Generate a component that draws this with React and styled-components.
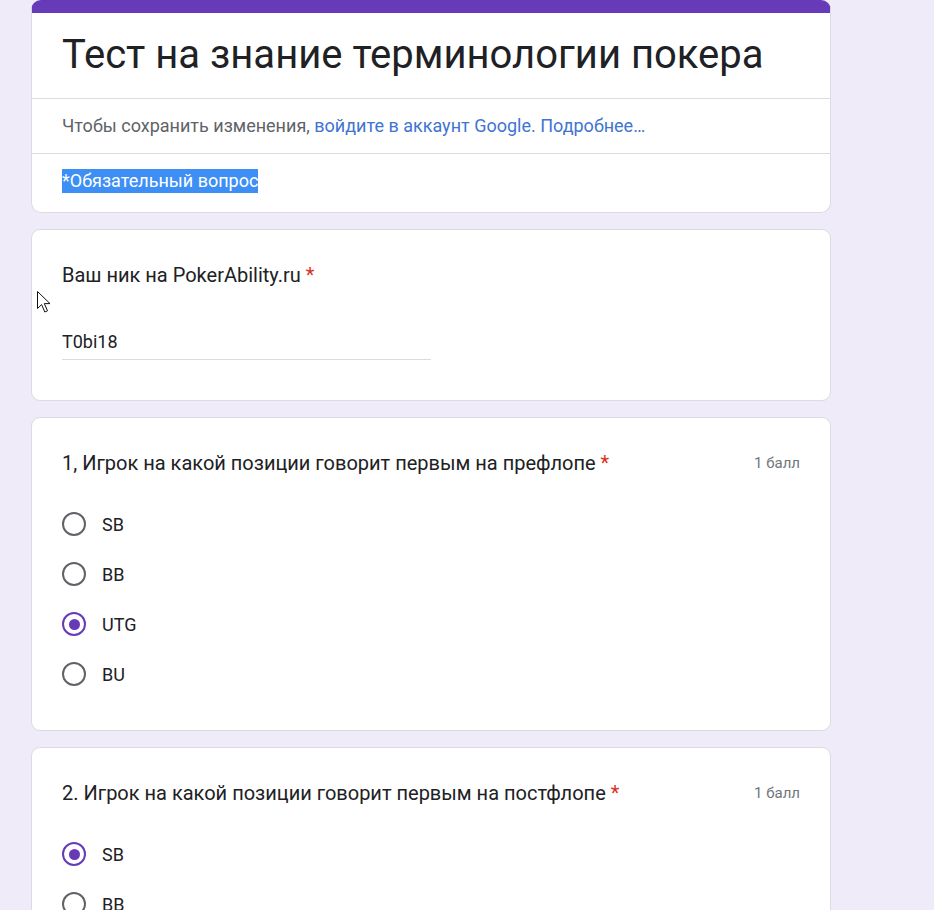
import React from 'react'
import styled, { createGlobalStyle } from 'styled-components'

const questions = [
    {
        title: '1, Игрок на какой позиции говорит первым на префлопе',
        options: ['SB', 'BB', 'UTG', 'BU'],
        checked: 'UTG'
    },
    {
        title: '2. Игрок на какой позиции говорит первым на постфлопе',
        options: ['SB', 'BB', 'UTG', 'BU'],
        checked: 'SB'
    }
]

const App = () => {
    return(
        <Page>
            <GlobalStyle />
            <HeaderCard>
                <Title>Тест на знание терминологии покера</Title>
                <Section>
                    <Note>
                        Чтобы сохранить изменения, <Link>войдите в аккаунт Google.</Link> <Link>Подробнее…</Link>
                    </Note>
                </Section>
                <Section last>
                    <Selected>*Обязательный вопрос</Selected>
                </Section>
            </HeaderCard>

            <Card>
                <QuestionRow>
                    <Question>Ваш ник на PokerAbility.ru <Star>*</Star></Question>
                </QuestionRow>
                <Answer>T0bi18</Answer>
                <Cursor width="16" height="23" viewBox="0 0 16 23">
                    <path d="M0.5 0.5 L0.5 17.5 L4.6 13.6 L7.8 21 L10.5 19.8 L7.3 12.6 L13 12.6 Z" fill="#fff" stroke="#111" strokeWidth="1" strokeLinejoin="round" />
                </Cursor>
            </Card>

            {questions.map(q => (
                <Card key={q.title} spaced>
                    <QuestionRow>
                        <Question>{q.title} <Star>*</Star></Question>
                        <Points>1 балл</Points>
                    </QuestionRow>
                    <Options>
                        {q.options.map(opt => (
                            <Option key={opt}>
                                <Radio checked={opt === q.checked} />
                                <OptionLabel>{opt}</OptionLabel>
                            </Option>
                        ))}
                    </Options>
                </Card>
            ))}
        </Page>
    )
}

export default App

const GlobalStyle = createGlobalStyle`
    html, body {
        margin: 0;
        background-color: #f0ebf8;
        font-family: Roboto, 'Noto Sans', Arial, sans-serif;
        color: #202124;
    }
    body {
        overflow: hidden;
        height: 910px;
    }
`
const Page = styled.div`
    width: 800px;
    padding: 0 0 0 31px;
    display: flex;
    flex-direction: column;
    gap: 16px;
`
const Card = styled.div`
    position: relative;
    background-color: white;
    border: 1px solid #dadce0;
    border-radius: 9px;
    padding: 32px 30px ${props => props.spaced ? '31px' : '40px'} 30px;
`
const HeaderCard = styled.div`
    background-color: white;
    border: 1px solid #dadce0;
    border-top: 13px solid #673ab7;
    border-radius: 10px;
`
const Title = styled.h1`
    margin: 0;
    padding: 17px 30px 18px 30px;
    font-size: 40px;
    line-height: 50px;
    font-weight: 400;
    color: #202124;
`
const Section = styled.div`
    border-top: 1px solid #dadce0;
    padding: 15px 30px ${props => props.last ? '19px' : '15px'} 30px;
    font-size: 18px;
    line-height: 24px;
`
const Note = styled.div`
    color: #5f6368;
`
const Link = styled.span`
    color: #3f74d1;
`
const Selected = styled.span`
    display: inline-block;
    background-color: #3d8ff6;
    color: white;
    line-height: 24px;
`
const QuestionRow = styled.div`
    display: flex;
    justify-content: space-between;
    align-items: center;
`
const Question = styled.div`
    font-size: 20px;
    line-height: 26px;
    color: #202124;
`
const Star = styled.span`
    color: #d93025;
`
const Points = styled.div`
    font-size: 15px;
    color: #70757a;
`
const Answer = styled.div`
    width: 369px;
    margin-top: 42px;
    padding-bottom: 5px;
    border-bottom: 1px solid #dadce0;
    font-size: 18px;
    line-height: 24px;
    color: #202124;
`
const Cursor = styled.svg`
    position: absolute;
    left: 5px;
    top: 61px;
`
const Options = styled.div`
    display: flex;
    flex-direction: column;
    margin-top: 23px;
`
const Option = styled.div`
    height: 50px;
    display: flex;
    align-items: center;
    gap: 16px;
`
const Radio = styled.div`
    box-sizing: border-box;
    width: 24px;
    height: 24px;
    border-radius: 50%;
    border: 2px solid ${props => props.checked ? '#673ab7' : '#5f6368'};
    display: flex;
    align-items: center;
    justify-content: center;
    &::after {
        content: '';
        display: ${props => props.checked ? 'block' : 'none'};
        width: 11px;
        height: 11px;
        border-radius: 50%;
        background-color: #673ab7;
    }
`
const OptionLabel = styled.div`
    font-size: 18px;
    color: #202124;
`
